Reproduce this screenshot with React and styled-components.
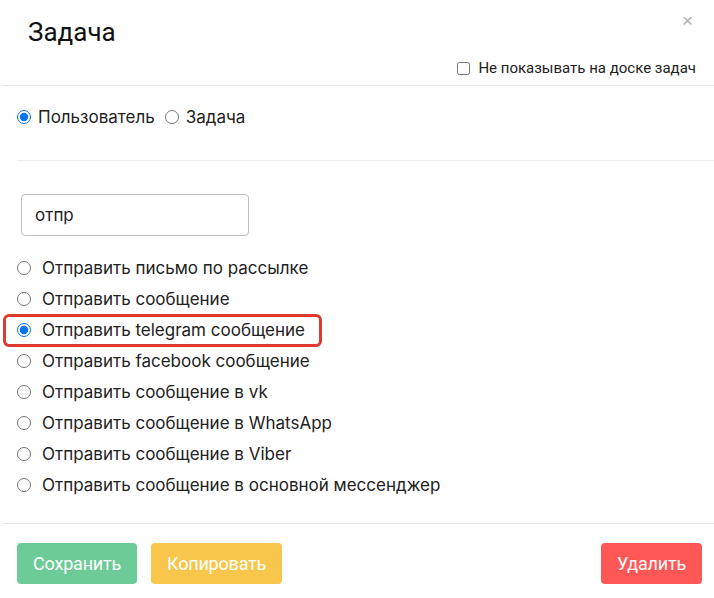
import React, {useState} from 'react';
import styled, {createGlobalStyle} from "styled-components"

const GlobalStyle = createGlobalStyle`
	html, body {
		margin: 0;
		padding: 0;
		background: #ffffff;
	}
	body {
		font-family: Inter, "Noto Sans", sans-serif;
		color: #222222;
	}
`

const Modal = styled.div`
	width: 714px;
	height: 598px;
	background: #ffffff;
	display: flex;
	flex-direction: column;
`

const Header = styled.div`
	padding: 14px 18px 7px 26px;
	border-bottom: 1px solid #e6e6e6;
	margin-left: 2px;
`

const TitleRow = styled.div`
	display: flex;
	justify-content: space-between;
	align-items: flex-start;
`

const Title = styled.h1`
	margin: 0;
	font-family: Roboto, "Liberation Sans", sans-serif;
	font-weight: 400;
	font-size: 26px;
	line-height: 36px;
	color: #111111;
`

const Close = styled.div`
	font-family: "Liberation Sans", sans-serif;
	font-size: 19px;
	line-height: 19px;
	color: #b0b0b0;
	margin-top: -3px;
	margin-right: 3px;
	cursor: pointer;
`

const HideRow = styled.label`
	margin-top: 8px;
	height: 20px;
	display: flex;
	justify-content: flex-end;
	align-items: center;
	gap: 8px;
	font-family: Roboto, "Liberation Sans", sans-serif;
	font-size: 15px;
	color: #222222;
`

const Check = styled.input`
	margin: 0;
	width: 13px;
	height: 13px;
`

const TypeSection = styled.div`
	margin-left: 17px;
	padding: 21px 0 33px;
	border-bottom: 1px solid #ececec;
	display: flex;
	align-items: center;
`

const Option = styled.label`
	display: flex;
	align-items: center;
	gap: ${({$gap}) => $gap || 7}px;
	height: ${({$h}) => $h || 20}px;
	font-size: 17px;
	color: #222222;
	margin-right: 10px;
	position: relative;
	cursor: pointer;

	${({$marked}) => $marked && `
		&::after {
			content: "";
			position: absolute;
			left: -14px;
			top: 0px;
			width: 313px;
			height: 27px;
			border: 3px solid #e0392e;
			border-radius: 6px;
			pointer-events: none;
		}
	`}
`

const Radio = styled.input`
	margin: 0;
	width: 14px;
	height: 14px;
	accent-color: #0a74ee;
`

const Body = styled.div`
	flex: 1;
	padding: 33px 0 0 17px;
	border-bottom: 1px solid #e6e6e6;
	margin-left: 2px;
`

const Search = styled.input`
	box-sizing: border-box;
	margin-left: 2px;
	width: 228px;
	height: 42px;
	border: 1px solid #bdbdc4;
	border-radius: 4px;
	padding: 0 13px;
	font-family: Inter, "Noto Sans", sans-serif;
	font-size: 17px;
	color: #222222;
	outline: none;
`

const List = styled.div`
	margin-top: 16px;
	margin-left: -2px;
	display: flex;
	flex-direction: column;
`

const Footer = styled.div`
	padding: 19px 12px 14px 17px;
	display: flex;
	align-items: center;
	gap: 14px;
`

const Button = styled.button`
	height: 41px;
	padding: 0 16px;
	border: none;
	border-radius: 4px;
	font-family: Roboto, "Liberation Sans", sans-serif;
	font-size: 18px;
	letter-spacing: -0.2px;
	color: #ffffff;
	background-color: ${({$color}) => $color};
	margin-left: ${({$push}) => $push ? 'auto' : '0'};
	cursor: pointer;
`

const actions = [
	"Отправить письмо по рассылке",
	"Отправить сообщение",
	"Отправить telegram сообщение",
	"Отправить facebook сообщение",
	"Отправить сообщение в vk",
	"Отправить сообщение в WhatsApp",
	"Отправить сообщение в Viber",
	"Отправить сообщение в основной мессенджер",
]

const App = () => {
	const [kind, setKind] = useState("user")
	const [action, setAction] = useState(2)
	const [query, setQuery] = useState("отпр")

	return (
		<Modal>
			<GlobalStyle />
			<Header>
				<TitleRow>
					<Title>Задача</Title>
					<Close>×</Close>
				</TitleRow>
				<HideRow>
					<Check type="checkbox" />
					Не показывать на доске задач
				</HideRow>
			</Header>
			<TypeSection>
				<Option>
					<Radio type="radio" name="kind" checked={kind === "user"} onChange={() => setKind("user")} />
					Пользователь
				</Option>
				<Option>
					<Radio type="radio" name="kind" checked={kind === "task"} onChange={() => setKind("task")} />
					Задача
				</Option>
			</TypeSection>
			<Body>
				<Search value={query} onChange={e => setQuery(e.target.value)} />
				<List>
					{actions.map((a, i) => (
						<Option key={a} $h={31} $gap={11} $marked={i === 2}>
							<Radio type="radio" name="action" checked={action === i} onChange={() => setAction(i)} />
							{a}
						</Option>
					))}
				</List>
			</Body>
			<Footer>
				<Button $color="#6ccb96">Сохранить</Button>
				<Button $color="#f7c64a">Копировать</Button>
				<Button $color="#ff5656" $push>Удалить</Button>
			</Footer>
		</Modal>
	);
};

export default App;
